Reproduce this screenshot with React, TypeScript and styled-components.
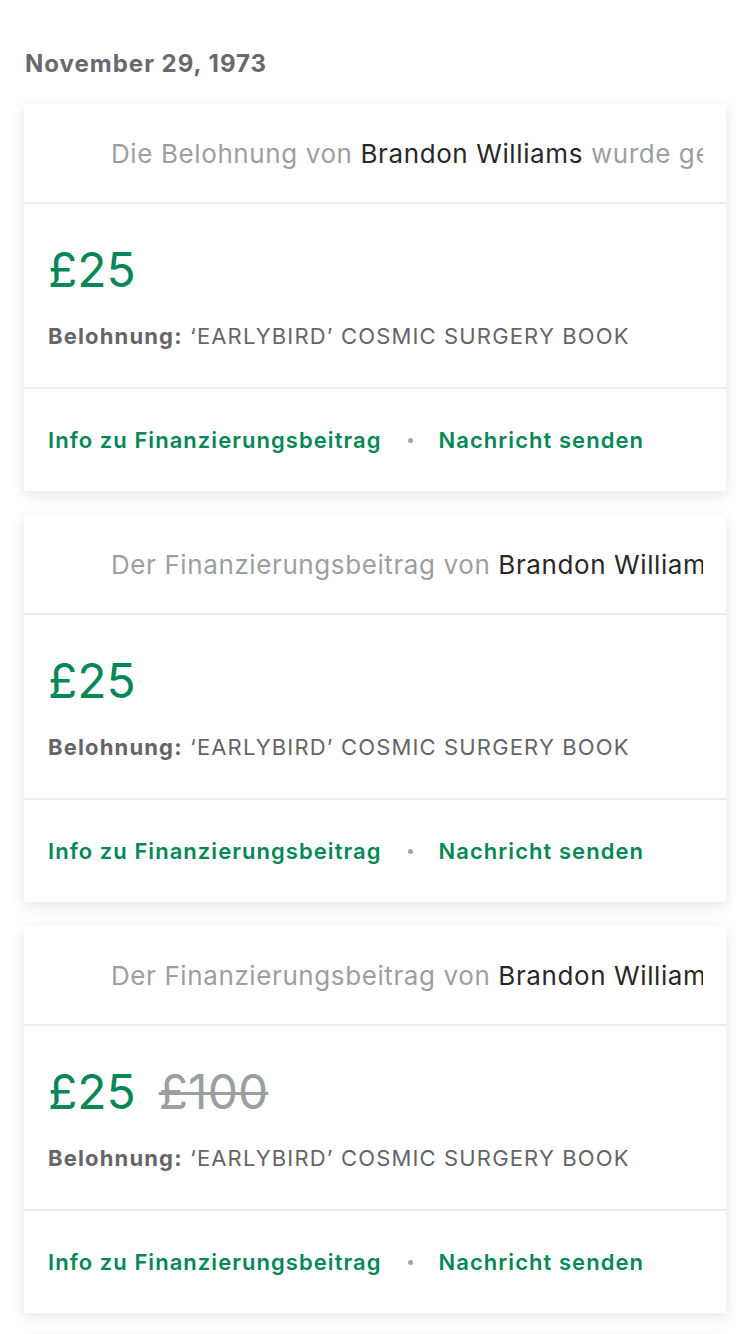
import styled, { createGlobalStyle } from "styled-components";

const GlobalStyle = createGlobalStyle`
  body {
    margin: 0;
    background: #fff;
    font-family: Inter, "Noto Sans", sans-serif;
    -webkit-font-smoothing: antialiased;
  }
`;

type Pledge = {
  lead: string;
  name: string;
  tail: string;
  amount: string;
  original?: string;
  reward: string;
};

const pledges: Pledge[] = [
  {
    lead: "Die Belohnung von",
    name: "Brandon Williams",
    tail: "wurde geändert",
    amount: "£25",
    reward: "‘EARLYBIRD’ COSMIC SURGERY BOOK",
  },
  {
    lead: "Der Finanzierungsbeitrag von",
    name: "Brandon Williams",
    tail: "wurde erhöht",
    amount: "£25",
    reward: "‘EARLYBIRD’ COSMIC SURGERY BOOK",
  },
  {
    lead: "Der Finanzierungsbeitrag von",
    name: "Brandon Williams",
    tail: "wurde gesenkt",
    amount: "£25",
    original: "£100",
    reward: "‘EARLYBIRD’ COSMIC SURGERY BOOK",
  },
];

export default function App() {
  return (
    <>
      <GlobalStyle />
      <Page>
        <DateHeading>November 29, 1973</DateHeading>
        <CardList>
          {pledges.map((p, i) => (
            <Card key={i}>
              <CardHeader>
                <HeaderText>
                  <Muted>{p.lead} </Muted>
                  <Name>{p.name}</Name>
                  <Muted> {p.tail}</Muted>
                </HeaderText>
              </CardHeader>
              <CardBody>
                <AmountRow>
                  <Amount>{p.amount}</Amount>
                  {p.original && <Original>{p.original}</Original>}
                </AmountRow>
                <Reward>
                  <strong>Belohnung:</strong> {p.reward}
                </Reward>
              </CardBody>
              <CardFooter>
                <FooterLink>Info zu Finanzierungsbeitrag</FooterLink>
                <Dot />
                <FooterLink>Nachricht senden</FooterLink>
              </CardFooter>
            </Card>
          ))}
          <Card />
        </CardList>
      </Page>
    </>
  );
}

const Page = styled.div`
  padding: 0 24px;
  height: 1334px;
  overflow: hidden;
`;

const DateHeading = styled.h2`
  margin: 0;
  padding: 49px 0 25px 1px;
  font-size: 24px;
  line-height: 30px;
  font-weight: 700;
  letter-spacing: 1px;
  color: #68686e;
`;

const CardList = styled.div`
  display: flex;
  flex-direction: column;
  gap: 24px;
`;

const Card = styled.div`
  background: #fff;
  box-shadow: 0 4px 14px rgba(0, 0, 0, 0.1);
  min-height: 387px;
`;

const CardHeader = styled.div`
  height: 98px;
  display: flex;
  align-items: center;
  padding: 0 23px 0 87px;
  border-bottom: 2px solid #eeeef2;
`;

const HeaderText = styled.div`
  flex: 1;
  min-width: 0;
  overflow: hidden;
  white-space: pre;
  font-size: 26px;
  letter-spacing: 0.6px;
`;

const Muted = styled.span`
  color: #9c9f9f;
`;

const Name = styled.span`
  color: #282828;
`;

const CardBody = styled.div`
  height: 183px;
  padding: 0 24px;
  display: flex;
  flex-direction: column;
  justify-content: center;
  gap: 24px;
  border-bottom: 2px solid #eeeef2;
`;

const AmountRow = styled.div`
  display: flex;
  align-items: baseline;
  gap: 23px;
`;

const Amount = styled.span`
  font-size: 48px;
  line-height: 56px;
  color: #058757;
`;

const Original = styled.span`
  font-size: 48px;
  line-height: 56px;
  color: #9c9f9f;
  text-decoration: line-through;
  text-decoration-thickness: 3px;
`;

const Reward = styled.div`
  font-size: 22px;
  line-height: 28px;
  letter-spacing: 1.15px;
  color: #656569;
  strong {
    font-weight: 700;
  }
`;

const CardFooter = styled.div`
  height: 102px;
  padding: 0 24px;
  display: flex;
  align-items: center;
  gap: 26px;
`;

const FooterLink = styled.span`
  font-size: 22px;
  font-weight: 600;
  letter-spacing: 1.05px;
  color: #058757;
`;

const Dot = styled.span`
  width: 5px;
  height: 5px;
  border-radius: 50%;
  background: #a4a4a4;
`;
